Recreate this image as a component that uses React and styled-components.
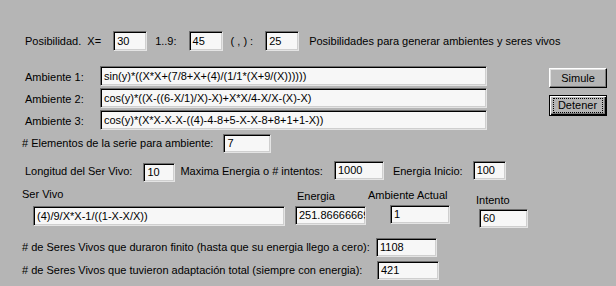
import React from 'react';
import styled, { createGlobalStyle } from 'styled-components';

const GlobalStyle = createGlobalStyle`
  html, body {
    margin: 0;
    padding: 0;
    background: #b5b5b5;
  }
  body {
    font-family: 'Liberation Sans', Arial, sans-serif;
    font-size: 11px;
    color: #000;
  }
`;

const Form = styled.div`
  width: 616px;
  height: 286px;
  overflow: hidden;
  background: #b5b5b5;
  display: flex;
  flex-direction: column;
`;

const Row = styled.div`
  display: flex;
  align-items: center;
  margin-top: ${p => p.$top || 0}px;
  padding-left: ${p => p.$left || 0}px;
  height: ${p => p.$h || 20}px;
`;

const Label = styled.span`
  white-space: nowrap;
  line-height: 13px;
  margin-left: ${p => p.$ml || 0}px;
  margin-top: ${p => p.$mt || 0}px;
`;

const Field = styled.div`
  box-sizing: border-box;
  width: ${p => p.$w}px;
  height: ${p => p.$h || 20}px;
  margin-left: ${p => p.$ml || 0}px;
  margin-top: ${p => p.$mt || 0}px;
  background: #f7f7f7;
  border: 1px solid;
  border-color: #6e6e6e #e4e4e4 #e4e4e4 #6e6e6e;
  box-shadow: inset 1px 1px 0 #000, inset -1px -1px 0 #cfcfcf;
  padding: 0 3px;
  display: flex;
  align-items: center;
  white-space: nowrap;
  overflow: hidden;
  line-height: 13px;
`;

const AmbientBlock = styled.div`
  display: flex;
  margin-top: 15px;
`;

const AmbientList = styled.div`
  display: flex;
  flex-direction: column;
  gap: 2px;
  padding-left: 25px;
`;

const AmbientRow = styled.div`
  display: flex;
  height: 20px;
`;

const AmbientLabel = styled.span`
  width: 75px;
  padding-top: 5px;
  white-space: nowrap;
  line-height: 13px;
`;

const Buttons = styled.div`
  display: flex;
  flex-direction: column;
  margin-left: 62px;
  padding-top: 2px;
  gap: 7px;
`;

const Button = styled.button`
  box-sizing: border-box;
  width: 58px;
  height: ${p => (p.$default ? 21 : 20)}px;
  padding: 0;
  font-family: inherit;
  font-size: 11px;
  color: #000;
  background: #b5b5b5;
  border: 1px solid;
  border-color: ${p => (p.$default ? '#000' : '#fff #000 #000 #fff')};
  box-shadow: ${p =>
    p.$default
      ? 'inset 1px 1px 0 #fff, inset -1px -1px 0 #000, inset -2px -2px 0 #7b7b7b'
      : 'inset -1px -1px 0 #7b7b7b, inset 1px 1px 0 #dedede'};
  display: flex;
  align-items: center;
  justify-content: center;
`;

const FocusRing = styled.span`
  box-sizing: border-box;
  width: 50px;
  height: 15px;
  margin-left: -1px;
  margin-top: -1px;
  border: 1px dotted #000;
  display: flex;
  align-items: center;
  justify-content: center;
`;

const LiveBlock = styled.div`
  display: flex;
  margin-top: 6px;
  padding-left: 22px;
`;

const LiveColumn = styled.div`
  display: flex;
  flex-direction: column;
  align-items: flex-start;
  margin-left: ${p => p.$ml || 0}px;
`;

const Counts = styled.div`
  display: grid;
  grid-template-columns: 354px auto;
  row-gap: 4px;
  margin-top: 10px;
  padding-left: 22px;
  align-items: center;
`;

export default function App() {
  return (
    <>
      <GlobalStyle />
      <Form>
        <Row $top={31} $left={25}>
          <Label>Posibilidad.&nbsp; X=</Label>
          <Field $w={34} $ml={12}>30</Field>
          <Label $ml={8}>1..9:</Label>
          <Field $w={34} $ml={12}>45</Field>
          <Label $ml={8}>( , ) :</Label>
          <Field $w={34} $ml={12}>25</Field>
          <Label $ml={10}>Posibilidades para generar ambientes y seres vivos</Label>
        </Row>

        <AmbientBlock>
          <AmbientList>
            <AmbientRow>
              <AmbientLabel>Ambiente 1:</AmbientLabel>
              <Field $w={387}>sin(y)*((X*X+(7/8+X+(4)/(1/1*(X+9/(X))))))</Field>
            </AmbientRow>
            <AmbientRow>
              <AmbientLabel>Ambiente 2:</AmbientLabel>
              <Field $w={387}>cos(y)*((X-((6-X/1)/X)-X)+X*X/4-X/X-(X)-X)</Field>
            </AmbientRow>
            <AmbientRow>
              <AmbientLabel>Ambiente 3:</AmbientLabel>
              <Field $w={387}>cos(y)*(X*X-X-X-((4)-4-8+5-X-X-8+8+1+1-X))</Field>
            </AmbientRow>
          </AmbientList>
          <Buttons>
            <Button>Simule</Button>
            <Button $default>
              <FocusRing>Detener</FocusRing>
            </Button>
          </Buttons>
        </AmbientBlock>

        <Row $top={3} $left={22}>
          <Label>
            # Elementos de la serie para ambiente:
          </Label>
          <Field $w={48} $ml={10} $h={19}>7</Field>
        </Row>

        <Row $top={7} $left={25} $h={22}>
          <Label>Longitud del Ser Vivo:</Label>
          <Field $w={32} $ml={11} $h={19} $mt={3}>10</Field>
          <Label $ml={5}>Maxima Energia o # intentos:</Label>
          <Field $w={50} $ml={11} $h={19} $mt={-1}>1000</Field>
          <Label $ml={9}>Energia Inicio:</Label>
          <Field $w={33} $ml={10} $h={19} $mt={-1}>100</Field>
        </Row>

        <LiveBlock>
          <LiveColumn>
            <Label>Ser Vivo</Label>
            <Field $w={252} $ml={11} $mt={5}>(4)/9/X*X-1/((1-X-X/X))</Field>
          </LiveColumn>
          <LiveColumn $ml={10}>
            <Label $ml={2} $mt={2}>Energia</Label>
            <Field $w={71} $mt={3} $h={19}>251.86666669</Field>
          </LiveColumn>
          <LiveColumn $ml={2}>
            <Label $mt={1}>Ambiente Actual</Label>
            <Field $w={60} $ml={22} $mt={3} $h={19}>1</Field>
          </LiveColumn>
          <LiveColumn $ml={26}>
            <Label $mt={6}>Intento</Label>
            <Field $w={49} $ml={3} $mt={2} $h={19}>60</Field>
          </LiveColumn>
        </LiveBlock>

        <Counts>
          <Label>
            # de Seres Vivos que duraron finito (hasta que su energia llego a cero):
          </Label>
          <Field $w={61} $h={19}>1108</Field>
          <Label>
            # de Seres Vivos que tuvieron adaptación total (siempre con energia):
          </Label>
          <Field $w={62} $h={19} $ml={1}>421</Field>
        </Counts>
      </Form>
    </>
  );
}
